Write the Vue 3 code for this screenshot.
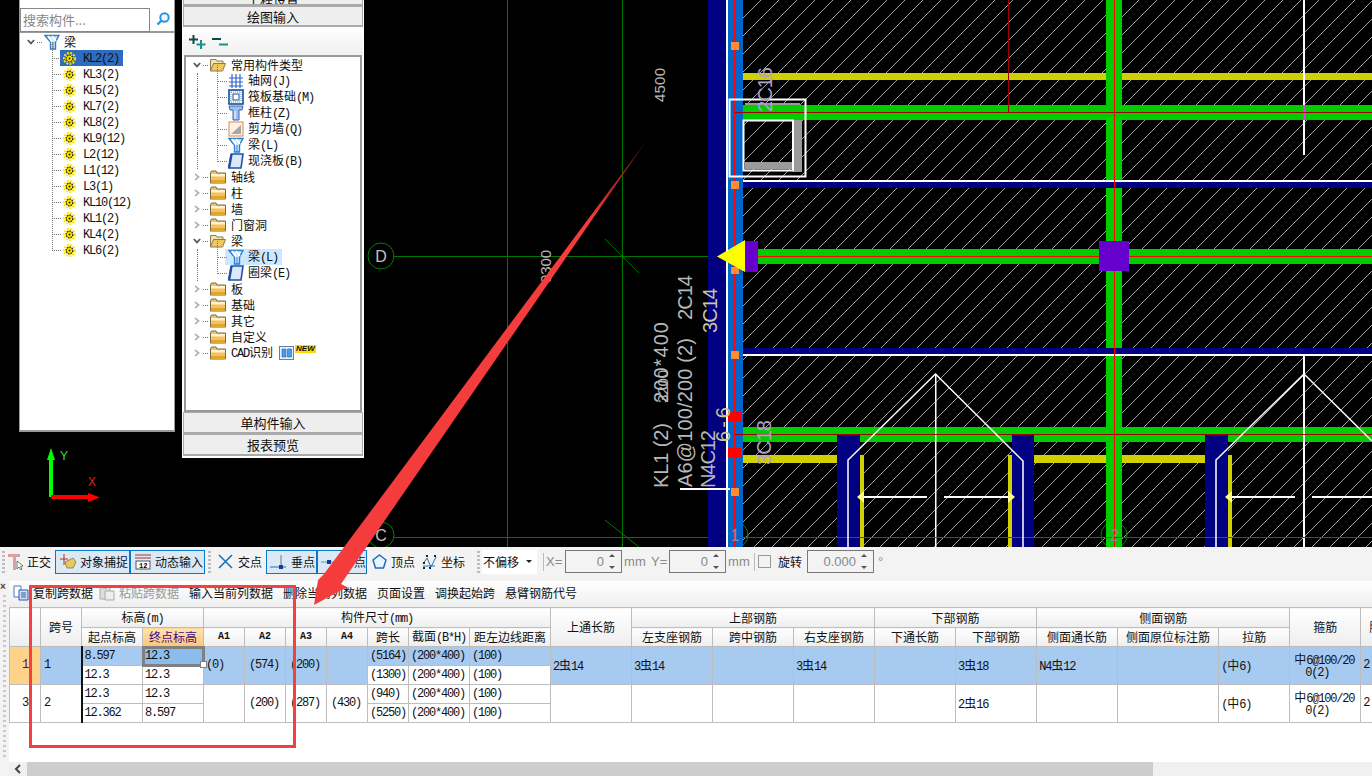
<template>
  <div class="app">
    <svg class="defs" width="0" height="0">
      <symbol id="beam" viewBox="0 0 16 16">
        <path d="M1 1.500H15L11.500 8V15H6.500V8Z" fill="#d5ecff" stroke="#2a7fd0" stroke-width="1.400"/>
        <path d="M4 2L8 8M8 2L12 7" stroke="#fff" stroke-width="1.600"/>
        <path d="M9 8V15" stroke="#2a7fd0"/>
      </symbol>
      <symbol id="gear" viewBox="0 0 13 13">
        <circle cx="6.500" cy="6.500" r="5.600" fill="none" stroke="#ffe900" stroke-width="1.800" stroke-dasharray="2 1.300"/>
        <circle cx="6.500" cy="6.500" r="4.300" fill="#ffe900"/>
        <circle cx="6.500" cy="6.500" r="3.300" fill="none" stroke="#111" stroke-width="1.300" stroke-dasharray="1.500 1"/>
        <circle cx="6.500" cy="6.500" r="1" fill="#111"/>
      </symbol>
      <symbol id="folder" viewBox="0 0 16 14">
        <path d="M.5 3V13H15.500V3H7L6 1H1.500Z" fill="#f3c45a" stroke="#7a6a44"/>
        <path d="M1 4H15V6.500H1Z" fill="#fdf3cf"/>
        <path d="M1 10H15V13H1Z" fill="#e0a62f"/>
      </symbol>
      <symbol id="folder-open" viewBox="0 0 16 14">
        <path d="M.5 13V1.500H6L7 3H13V5.500" fill="#f2e3b4" stroke="#8b7a52"/>
        <path d="M.5 13L3.500 5.500H15.500L12.500 13Z" fill="#f2c660" stroke="#8b7a52"/>
      </symbol>
      <symbol id="axis-grid" viewBox="0 0 16 16">
        <path d="M4 1V15M8 1V15M12 1V15M1 5H15M1 9H15M1 13H15" stroke="#3264c8" stroke-width="1.200"/>
      </symbol>
      <symbol id="raft" viewBox="0 0 16 16">
        <rect x="1" y="1" width="14" height="14" fill="#fff" stroke="#164e94" stroke-width="1.600"/>
        <rect x="5" y="5" width="6" height="6" fill="#fff" stroke="#164e94"/>
        <path d="M3 3H13M3 13H13M3 3V13M13 3V13" stroke="#4a88cc" stroke-dasharray="1 1"/>
      </symbol>
      <symbol id="column" viewBox="0 0 16 16">
        <path d="M1 1H15L14 5H11V15H5V5H2Z" fill="#9fc0ee" stroke="#3a66b4"/>
        <path d="M7 6V14" stroke="#fff"/>
      </symbol>
      <symbol id="wall" viewBox="0 0 16 16">
        <rect x="1" y="1" width="14" height="14" fill="#fff1e4" stroke="#d98a4a"/>
        <path d="M3 13L13 4L13 13Z" fill="#a8a8a8"/>
      </symbol>
      <symbol id="slab" viewBox="0 0 16 16">
        <path d="M3.500 1H15L13 15H1Z" fill="#dbe9fa" stroke="#1f50a8" stroke-width="1.600"/>
        <path d="M1 15L3.500 1" stroke="#1f50a8" stroke-width="2.400"/>
      </symbol>
      <symbol id="caret-open" viewBox="0 0 8 8">
        <path d="M.8 2L4 5.400L7.200 2" fill="none" stroke="#555" stroke-width="1.700"/>
      </symbol>
      <symbol id="caret" viewBox="0 0 8 8">
        <path d="M2 .8L5.600 4L2 7.200" fill="none" stroke="#b4b4b4" stroke-width="1.700"/>
      </symbol>
    </svg>

    <div class="cad">
      <svg class="cad-canvas" width="1372" height="547" viewBox="0 0 1372 547">
        <path :d="hatch" stroke="#a0a0a0" stroke-width="1" fill="none" shape-rendering="crispEdges"/>
        <path d="M507.500 0V547M622.500 0V547M394 256.500H717M394 537.500H735M605 239L639 273M605 520L639 547" stroke="#007800" fill="none"/>
        <circle v-for="c in axisDots" :key="c.t" :cx="c.x" :cy="c.y" r="13" fill="none" stroke="#008000"/>
        <rect v-for="(r, i) in bars" :key="i" :x="r[0]" :y="r[1]" :width="r[2]" :height="r[3]" :fill="r[4]"/>
        <path d="M717 256.500L745 240V272Z" fill="#ff0"/>
        <path d="M848 547V460L935.500 374L1023 461V547M1216 547V460L1304 374L1372 441" fill="none" stroke="#fff" stroke-width="1.500"/>
        <path d="M857 497L864 491V503ZM1015 497L1008 491V503ZM1225 497L1232 491V503Z" fill="#ff8"/>
        <path d="M864 497H927M944 497H1008M1232 497H1295M1312 497H1372M680 489H730" stroke="#fff" stroke-width="2" fill="none"/>
        <path d="M729.500 99.500H805.500V176.500H729.500Z M743.500 120.500H793V170.500H743.500Z" fill="none" stroke="#fff" stroke-width="2"/>
        <path d="M47 460H49V497H53V460H55L51 448Z" fill="#0f0"/>
        <path d="M51 495H88V493L100 497.500L88 502V499H51Z" fill="#f00"/>
        <text x="60" y="460" class="axis-y">Y</text>
        <text x="88" y="486" class="axis-x">X</text>
        <text v-for="c in axisDots" :key="c.t + 't'" :x="c.x" :y="c.y + 6" class="axis-t" :class="{ dim: c.dim }">{{ c.t }}</text>
        <text
            v-for="l in cadLabels"
            :key="l.t"
            class="cad-t"
            :x="l.x"
            :y="l.y"
            :font-size="l.s"
            :fill="l.c || '#b8b8b8'"
            :textLength="l.w"
            lengthAdjust="spacing"
            :transform="`rotate(-90 ${l.x} ${l.y})`">{{ l.t }}</text>
      </svg>

      <div class="panel-left">
        <div class="search">
          <div class="search-box">搜索构件...</div>
          <svg class="search-ic" width="16" height="16" viewBox="0 0 16 16">
            <circle cx="9.500" cy="6.500" r="4.200" fill="#eaf6ff" stroke="#2e96d8" stroke-width="2"/>
            <path d="M6.500 9.500L2.500 13.500" stroke="#2e96d8" stroke-width="2.400"/>
          </svg>
        </div>
        <div class="tree">
          <div class="row">
            <svg class="caret"><use href="#caret-open"/></svg>
            <i class="dots root-dots"></i>
            <svg class="ic"><use href="#beam"/></svg>
            <span class="label root-label">梁</span>
          </div>
          <div v-for="(name, i) in members" :key="name" class="row member">
            <div class="node" :class="{ picked: i === 0 }">
              <svg class="gear"><use href="#gear"/></svg>
              <span class="label gear-label"><T :t="name"/></span>
            </div>
          </div>
        </div>
      </div>

      <div class="panel-mid">
        <div class="side-btn cut">工程设置</div>
        <div class="side-btn">绘图输入</div>
        <div class="expand">
          <svg width="18" height="14" viewBox="0 0 18 14">
            <path d="M4.500 0V9M0 4.500H9" stroke="#0d4a48" stroke-width="2"/>
            <path d="M12 5V14M7.500 9.500H16.500" stroke="#12948e" stroke-width="2"/>
          </svg>
          <svg width="18" height="14" viewBox="0 0 18 14">
            <path d="M0 4H9" stroke="#0d4a48" stroke-width="2"/>
            <path d="M7 9.500H16" stroke="#12948e" stroke-width="2"/>
          </svg>
        </div>
        <div class="type-tree">
          <div v-for="r in typeRows" :key="r.label + r.lvl" class="row" :class="r.lvl ? 'lvl1' : 'lvl0'">
            <template v-if="r.lvl">
              <div class="node" :class="{ soft: r.sel }">
                <svg class="ic"><use :href="'#' + r.icon"/></svg>
                <span class="label child-label"><T :t="r.label"/></span>
              </div>
            </template>
            <template v-else>
              <svg class="caret"><use :href="r.open ? '#caret-open' : '#caret'"/></svg>
              <i class="dots"></i>
              <svg class="fold"><use :href="r.open ? '#folder-open' : '#folder'"/></svg>
              <span class="label fold-label"><T :t="r.label"/></span>
              <template v-if="r.isNew">
                <svg class="cad-ic" width="15" height="14" viewBox="0 0 15 14">
                  <rect x=".5" y=".5" width="14" height="13" fill="#e8f2fc" stroke="#6a7f98"/>
                  <path d="M3 3H7V11H3ZM8.500 3H12.500V11H8.500Z" fill="#4a9ce8" stroke="#1e64b4" stroke-width=".6"/>
                </svg>
                <span class="new-tag">NEW</span>
              </template>
            </template>
          </div>
        </div>
        <div class="side-btn low">单构件输入</div>
        <div class="side-btn low">报表预览</div>
      </div>
    </div>

    <div class="snapbar">
      <i class="grip"></i>
      <svg class="tool-ic ortho" width="16" height="18" viewBox="0 0 16 18">
        <path d="M0 1H12V4H8V17H5V4H0Z" fill="#dba0a0"/>
        <path d="M9 8L9 16L11 14L13 17L14 16L12.500 13.500L15 13Z" fill="#fff" stroke="#555" stroke-width=".8"/>
      </svg>
      <span class="txt ortho-t">正交</span>
      <div class="tbtn snap">
        <svg width="18" height="18" viewBox="0 0 18 18">
          <path d="M1 6H9M5 1V12" stroke="#b03020"/>
          <path d="M6 9L14 5L17 9L14 15L8 15Z" fill="#e8c860" stroke="#8a7430" stroke-width=".8"/>
        </svg>
        <span class="txt">对象捕捉</span>
      </div>
      <div class="tbtn snap">
        <svg width="18" height="18" viewBox="0 0 18 18">
          <path d="M1 2H17M1 5H17" stroke="#a33"/>
          <rect x="2" y="8" width="14" height="8" fill="#fff" stroke="#555"/>
          <text x="5" y="15" class="mini">12</text>
        </svg>
        <span class="txt">动态输入</span>
      </div>
      <i class="grip g2"></i>
      <svg class="tool-ic cross" width="15" height="15" viewBox="0 0 15 15">
        <path d="M1 1L14 14M14 1L1 14" stroke="#1f6fc0" stroke-width="1.600"/>
      </svg>
      <span class="txt cross-t">交点</span>
      <div class="tbtn pt first">
        <svg width="16" height="16" viewBox="0 0 16 16">
          <path d="M0 13H16" stroke="#1f6fc0"/>
          <path d="M11 1V13" stroke="#777"/>
          <rect x="9" y="11" width="4" height="4" fill="#123e94"/>
        </svg>
        <span class="txt">垂点</span>
      </div>
      <div class="tbtn pt">
        <svg width="16" height="16" viewBox="0 0 16 16">
          <path d="M0 8H16" stroke="#5a90cc"/>
          <rect x="6" y="6" width="4" height="4" fill="#123e94"/>
        </svg>
        <span class="txt">中点</span>
      </div>
      <svg class="tool-ic top-ic" width="15" height="15" viewBox="0 0 15 15">
        <path d="M7.500 1L14 6L11.500 14H3.500L1 6Z" fill="#e8f4ff" stroke="#1f6fc0" stroke-width="1.500"/>
      </svg>
      <span class="txt top-t">顶点</span>
      <svg class="tool-ic xy-ic" width="15" height="16" viewBox="0 0 15 16">
        <path d="M1 10L5 4L9 13L14 3M1 12H13" fill="none" stroke="#1f6fc0"/>
        <path d="M1 8h2v2H1zM4 1h2v2H4zM12 1h2v2h-2zM1 13h2v2H1zM7 13h2v2H7z" fill="#222"/>
      </svg>
      <span class="txt top-t">坐标</span>
      <i class="grip g3"></i>
      <div class="offset">
        <span class="txt">不偏移</span>
        <span class="drop"></span>
      </div>
      <i class="vline v1"></i>
      <span class="gray x-t">X=</span>
      <div class="spin s1"><span>0</span><i class="arrows"></i></div>
      <span class="gray mm">mm</span>
      <span class="gray y-t">Y=</span>
      <div class="spin s1"><span>0</span><i class="arrows"></i></div>
      <span class="gray mm">mm</span>
      <i class="vline v2"></i>
      <i class="check"></i>
      <span class="txt rot">旋转</span>
      <div class="spin s2"><span>0.000</span><i class="arrows"></i></div>
      <span class="gray deg">°</span>
    </div>

    <div class="lower">
      <div class="strip">
        <span class="strip-x">×</span>
      </div>
      <div class="lower-main">
        <div class="gridbar">
          <svg class="bar-ic" width="16" height="16" viewBox="0 0 16 16">
            <path d="M1 1H8V12H1Z" fill="#fff" stroke="#4a78b8"/>
            <path d="M6 5H15V15H6Z" fill="#cfe2f8" stroke="#2a5ca8"/>
            <path d="M8 8H13M8 10H13M8 12H13" stroke="#2a5ca8"/>
          </svg>
          <span class="bar-t b1">复制跨数据</span>
          <svg class="bar-ic p" width="16" height="16" viewBox="0 0 16 16">
            <path d="M1 2H11V14H1Z" fill="#ddd" stroke="#aaa"/>
            <path d="M6 6H15V15H6Z" fill="#eee" stroke="#aaa"/>
            <path d="M4 1H8V4H4Z" fill="#bbb"/>
          </svg>
          <span class="bar-t b2">粘贴跨数据</span>
          <span v-for="a in barActions" :key="a" class="bar-t act">{{ a }}</span>
        </div>
        <div class="table-wrap">
          <table class="span-table">
            <colgroup>
              <col v-for="(w, i) in colWidths" :key="i" :style="{ width: w + 'px' }">
            </colgroup>
            <thead>
              <tr>
                <th rowspan="2"></th>
                <th rowspan="2">跨号</th>
                <th colspan="2"><T t="标高(m)"/></th>
                <th colspan="7"><T t="构件尺寸(mm)"/></th>
                <th rowspan="2">上通长筋</th>
                <th colspan="3">上部钢筋</th>
                <th colspan="2">下部钢筋</th>
                <th colspan="3">侧面钢筋</th>
                <th rowspan="2">箍筋</th>
                <th rowspan="2">肢数</th>
              </tr>
              <tr class="head2">
                <th>起点标高</th>
                <th class="cur">终点标高</th>
                <th class="a">A1</th>
                <th class="a">A2</th>
                <th class="a">A3</th>
                <th class="a">A4</th>
                <th>跨长</th>
                <th><T t="截面(B*H)"/></th>
                <th>距左边线距离</th>
                <th>左支座钢筋</th>
                <th>跨中钢筋</th>
                <th>右支座钢筋</th>
                <th>下通长筋</th>
                <th>下部钢筋</th>
                <th>侧面通长筋</th>
                <th>侧面原位标注筋</th>
                <th>拉筋</th>
              </tr>
            </thead>
            <tbody>
              <tr class="sel">
                <td rowspan="2" class="num">1</td>
                <td rowspan="2" class="no">1</td>
                <td class="elev">8.597</td>
                <td class="active">12.3<i class="handle"></i></td>
                <td rowspan="2">(0)</td>
                <td rowspan="2" class="mid">(574)</td>
                <td rowspan="2" class="mid">(200)</td>
                <td rowspan="2"></td>
                <td>(5164)</td>
                <td>(200*400)</td>
                <td>(100)</td>
                <td rowspan="2"><T t="2虫14"/></td>
                <td rowspan="2"><T t="3虫14"/></td>
                <td rowspan="2"></td>
                <td rowspan="2"><T t="3虫14"/></td>
                <td rowspan="2"></td>
                <td rowspan="2"><T t="3虫18"/></td>
                <td rowspan="2"><T t="N4虫12"/></td>
                <td rowspan="2"></td>
                <td rowspan="2"><T t="(中6)"/></td>
                <td rowspan="2" class="stir"><T t="中6@100/20"/><br><span class="in"><T t="0(2)"/></span></td>
                <td rowspan="2">2</td>
              </tr>
              <tr class="plain">
                <td class="elev">12.3</td>
                <td>12.3</td>
                <td>(1300)</td>
                <td>(200*400)</td>
                <td>(100)</td>
              </tr>
              <tr class="plain">
                <td rowspan="2" class="num off">3</td>
                <td rowspan="2" class="no">2</td>
                <td class="elev">12.3</td>
                <td>12.3</td>
                <td rowspan="2"></td>
                <td rowspan="2" class="mid">(200)</td>
                <td rowspan="2" class="mid">(287)</td>
                <td rowspan="2" class="mid">(430)</td>
                <td>(940)</td>
                <td>(200*400)</td>
                <td>(100)</td>
                <td rowspan="2"></td>
                <td rowspan="2"></td>
                <td rowspan="2"></td>
                <td rowspan="2"></td>
                <td rowspan="2"></td>
                <td rowspan="2"><T t="2虫16"/></td>
                <td rowspan="2"></td>
                <td rowspan="2"></td>
                <td rowspan="2"><T t="(中6)"/></td>
                <td rowspan="2" class="stir"><T t="中6@100/20"/><br><span class="in"><T t="0(2)"/></span></td>
                <td rowspan="2">2</td>
              </tr>
              <tr class="plain">
                <td class="elev">12.362</td>
                <td>8.597</td>
                <td>(5250)</td>
                <td>(200*400)</td>
                <td>(100)</td>
              </tr>
            </tbody>
          </table>
        </div>
        <div class="hscroll">
          <div class="hs-btn">
            <svg width="8" height="10" viewBox="0 0 8 10"><path d="M6 1L2 5L6 9" fill="none" stroke="#444" stroke-width="2"/></svg>
          </div>
          <div class="hs-thumb"></div>
        </div>
      </div>
    </div>

    <div class="mark-box"></div>
    <svg class="mark-arrow" width="1372" height="776" viewBox="0 0 1372 776">
      <defs>
        <linearGradient id="fade" x1="647" y1="140" x2="590" y2="222" gradientUnits="userSpaceOnUse">
          <stop offset="0" stop-color="#501010"/>
          <stop offset="1" stop-color="#f43c3c"/>
        </linearGradient>
      </defs>
      <path d="M647 140L341 584L347 587L314 605L318 580L324 574Z" fill="url(#fade)"/>
    </svg>
  </div>
</template>

<script setup>
import { h } from "vue";

// latin and cjk runs need different sizes to look like the 12px bitmap font
const T = (props) =>
  (props.t.match(/[\x00-\x7f]+|[^\x00-\x7f]+/g) || []).map((s) =>
    h("span", { class: /^[\x00-\x7f]/.test(s) ? "lat" : "cjk" }, s)
  );
T.props = ["t"];

const members = [
  "KL2(2)", "KL3(2)", "KL5(2)", "KL7(2)", "KL8(2)", "KL9(12)", "L2(12)",
  "L1(12)", "L3(1)", "KL10(12)", "KL1(2)", "KL4(2)", "KL6(2)",
];

const typeRows = [
  { label: "常用构件类型", lvl: 0, open: true },
  { label: "轴网(J)", lvl: 1, icon: "axis-grid" },
  { label: "筏板基础(M)", lvl: 1, icon: "raft" },
  { label: "框柱(Z)", lvl: 1, icon: "column" },
  { label: "剪力墙(Q)", lvl: 1, icon: "wall" },
  { label: "梁(L)", lvl: 1, icon: "beam" },
  { label: "现浇板(B)", lvl: 1, icon: "slab" },
  { label: "轴线", lvl: 0 },
  { label: "柱", lvl: 0 },
  { label: "墙", lvl: 0 },
  { label: "门窗洞", lvl: 0 },
  { label: "梁", lvl: 0, open: true },
  { label: "梁(L) ", lvl: 1, icon: "beam", sel: true },
  { label: "圈梁(E)", lvl: 1, icon: "slab" },
  { label: "板", lvl: 0 },
  { label: "基础", lvl: 0 },
  { label: "其它", lvl: 0 },
  { label: "自定义", lvl: 0 },
  { label: "CAD识别", lvl: 0, isNew: true },
];

const barActions = ["输入当前列数据", "删除当前列数据", "页面设置", "调换起始跨", "悬臂钢筋代号"];

const colWidths = [31, 41, 61, 61, 41, 41, 41, 41, 41, 61, 81, 81, 81, 81, 81, 81, 81, 81, 101, 71, 71, 41];

// diagonal fill of the floor slab, x + y = c, clipped to the slab's rectangle
const hatch = (() => {
  let d = "";
  for (let c = 743; c < 1372 + 547; c += 18) {
    const x0 = Math.max(743, c - 547);
    const x1 = Math.min(1372, c);
    d += `M${x0} ${c - x0}L${x1} ${c - x1}`;
  }
  return d;
})();

const axisDots = [
  { t: "D", x: 381, y: 256 },
  { t: "C", x: 381, y: 535 },
  { t: "1", x: 735, y: 535, dim: true },
  { t: "2", x: 1114, y: 535, dim: true },
];

const NAVY = "#000080";
const GREEN = "#00cc00";
const YELLOW = "#d0d000";
const WHITE = "#ffffff";
const RED = "#ff0000";
const DARK = "#a00000";
const PURPLE = "#6600cc";
const ORANGE = "#ff8c32";

// x, y, w, h, colour: painted in this order
const bars = [
  [743, 73, 629, 7, YELLOW],
  [743, 105, 629, 15, GREEN],
  [758, 249, 614, 15, GREEN],
  [743, 427, 629, 15, GREEN],
  [743, 455, 94, 8, YELLOW],
  [1034, 455, 171, 8, YELLOW],
  [1106, 0, 16, 547, GREEN],
  [727, 182, 645, 6, NAVY],
  [727, 180, 645, 2, WHITE],
  [727, 348, 645, 6, NAVY],
  [727, 354, 645, 2, WHITE],
  [708, 0, 18, 547, NAVY],
  [726, 0, 2, 547, WHITE],
  [728, 0, 15, 547, "#0066cc"],
  [837, 435, 23, 112, NAVY],
  [1012, 435, 22, 112, NAVY],
  [1205, 435, 23, 112, NAVY],
  [860, 455, 4, 92, YELLOW],
  [1008, 455, 4, 92, YELLOW],
  [1228, 455, 4, 92, YELLOW],
  [935, 374, 1.500, 173, WHITE],
  [1303, 356, 2, 191, WHITE],
  [1303, 0, 2, 155, WHITE],
  [1303, 105, 2, 15, "#e040e0"],
  [1008, 0, 1, 112, DARK],
  [735, 112, 637, 1, DARK],
  [735, 434, 637, 1, DARK],
  [717, 256, 655, 1, RED],
  [735, 537, 637, 1, RED],
  [734, 0, 1, 547, RED],
  [1114, 0, 1, 547, RED],
  [745, 241, 13, 31, PURPLE],
  [1099, 241, 30, 30, PURPLE],
  [731, 42, 8, 8, ORANGE],
  [731, 181, 8, 8, ORANGE],
  [731, 267, 8, 7, ORANGE],
  [731, 351, 8, 8, ORANGE],
  [731, 488, 8, 8, ORANGE],
  [728, 412, 13, 9, RED],
  [728, 448, 13, 9, RED],
  [793, 120, 9, 52, "#9a9a9a"],
  [745, 162, 48, 7, "#9a9a9a"],
  [745, 103, 55, 2, "#9a9a9a"],
];

const cadLabels = [
  { t: "4500", x: 665, y: 102, w: 34, s: 15 },
  { t: "9300", x: 551, y: 283, w: 33, s: 15 },
  { t: "KL1 (2)", x: 668, y: 488, w: 65, s: 20 },
  { t: "3200", x: 668, y: 403, w: 33, s: 15 },
  { t: "200*400", x: 668, y: 403, w: 81, s: 20 },
  { t: "A6@100/200 (2)", x: 692, y: 487, w: 149, s: 20 },
  { t: "2C14", x: 692, y: 320, w: 45, s: 20 },
  { t: "N4C12", x: 715, y: 488, w: 58, s: 20 },
  { t: "3C14", x: 717, y: 333, w: 45, s: 20, c: "#c8c8a8" },
  { t: "6-6", x: 730, y: 442, w: 35, s: 20, c: "#c8c890" },
  { t: "3C18", x: 771, y: 465, w: 45, s: 20, c: "#b0a0c8" },
  { t: "2C16", x: 772, y: 112, w: 45, s: 20, c: "#b0a0c8" },
];
</script>

<style scoped>
.app {
  position: relative;
  width: 1372px;
  height: 776px;
  overflow: hidden;
  display: flex;
  flex-direction: column;
  background: #fff;
  font-family: "Noto Sans CJK SC", "Liberation Sans", sans-serif;
  font-size: 12px;
  color: #111;
}

.defs {
  position: absolute;
}

/* drawing area, the panels float on it like windows */
.cad {
  position: relative;
  height: 547px;
  flex: none;
  background: #000;
}

.cad-canvas {
  position: absolute;
  left: 0;
  top: 0;
  display: block;
}

.cad-t {
  font-family: "Liberation Sans", sans-serif;
}

.axis-t {
  font-family: "Liberation Sans", sans-serif;
  font-size: 16px;
  fill: #c0c0c0;
  text-anchor: middle;
}

.axis-t.dim {
  fill: #8a8a8a;
}

.axis-y,
.axis-x {
  font-family: "Liberation Sans", sans-serif;
  font-size: 12px;
}

.axis-y {
  fill: #2ce02c;
}

.axis-x {
  fill: #e02020;
}

.panel-left {
  position: absolute;
  left: 19px;
  top: 0;
  width: 156px;
  height: 432px;
  box-sizing: border-box;
  background: #fff;
  border: solid #999;
  border-width: 0 1px 2px 1px;
}

.search {
  height: 33px;
  box-sizing: border-box;
  padding-top: 8px;
  display: flex;
  border-bottom: 2px solid #999;
}

.search-box {
  width: 130px;
  height: 24px;
  box-sizing: border-box;
  border: 1px solid #888;
  color: #888;
  font-size: 13px;
  line-height: 21px;
  padding-left: 2px;
}

.search-ic {
  margin: 3px 0 0 5px;
}

.tree {
  padding-top: 1px;
}

.row {
  position: relative;
  height: 16px;
  display: flex;
  align-items: center;
}

.node {
  display: flex;
  align-items: center;
  height: 16px;
  padding: 0 4px 0 3px;
}

.caret {
  width: 8px;
  height: 8px;
  margin-left: 7px;
  flex: none;
}

.dots {
  width: 5px;
  margin-left: 2px;
  border-top: 1px dotted #777;
  flex: none;
}

.root-dots {
  margin-right: 2px;
}

.ic {
  width: 16px;
  height: 16px;
  flex: none;
}

.gear {
  width: 13px;
  height: 13px;
  flex: none;
}

.label {
  white-space: nowrap;
  padding-bottom: 2px;
}

.root-label {
  margin-left: 4px;
}

.gear-label {
  margin-left: 7px;
}

.member {
  padding-left: 40px;
}

.member::before {
  content: "";
  position: absolute;
  left: 32px;
  top: -8px;
  width: 8px;
  height: 16px;
  border-left: 1px dotted #777;
  border-bottom: 1px dotted #777;
}

.picked {
  background: #2f6cc0;
}

.panel-mid {
  position: absolute;
  left: 182px;
  top: 0;
  width: 182px;
  height: 458px;
  box-sizing: border-box;
  padding: 0 1px 1px;
  background: #fff;
}

.side-btn {
  height: 21px;
  box-sizing: border-box;
  border: solid #aaa;
  border-width: 1px 1px 2px;
  background: #eee;
  text-align: center;
  font-size: 13px;
  line-height: 19px;
}

.side-btn.cut {
  height: 6px;
  border-top: 0;
  overflow: hidden;
  line-height: 0;
}

.side-btn.low {
  height: 22px;
  line-height: 20px;
}

.expand {
  height: 28px;
  box-sizing: border-box;
  padding: 8px 0 0 6px;
  display: flex;
  gap: 5px;
  background: linear-gradient(#fff, #f0f0f0);
}

.type-tree {
  height: 357px;
  box-sizing: border-box;
  margin: 0 1px;
  padding-top: 0;
  border: 2px solid #999;
  background: #fff;
}

.fold {
  width: 16px;
  height: 14px;
  flex: none;
}

.fold-label {
  margin-left: 5px;
}

.lvl0 .dots {
  margin-right: 2px;
}

.lvl1 {
  padding-left: 39px;
}

.lvl1::before {
  content: "";
  position: absolute;
  left: 31px;
  top: -8px;
  width: 9px;
  height: 16px;
  border-left: 1px dotted #777;
  border-bottom: 1px dotted #777;
}

.lvl1::after {
  content: "";
  position: absolute;
  left: 11px;
  top: 0;
  height: 16px;
  border-left: 1px dotted #777;
}

.child-label {
  margin-left: 4px;
}

.soft {
  background: #cce8ff;
}

.cad-ic {
  margin-left: 6px;
}

.new-tag {
  margin: -8px 0 0 1px;
  padding: 0 1px;
  background: #ffdc00;
  font: italic bold 8px/8px "Liberation Sans", sans-serif;
  color: #111;
}

/* snap toolbar */
.snapbar {
  height: 34px;
  flex: none;
  box-sizing: border-box;
  padding-bottom: 5px;
  display: flex;
  align-items: center;
  background: #f3f3f3;
}

.grip {
  width: 3px;
  height: 22px;
  margin-left: 2px;
  flex: none;
  background: repeating-linear-gradient(#bbb 0 2px, transparent 2px 4px);
}

.g2 {
  margin-left: 3px;
}

.g3 {
  margin-left: 12px;
}

.tool-ic {
  flex: none;
}

.ortho {
  margin-left: 3px;
}

.txt {
  white-space: nowrap;
  flex: none;
}

.ortho-t {
  margin-left: 3px;
}

.tbtn {
  height: 24px;
  box-sizing: border-box;
  display: flex;
  align-items: center;
  border: 1px solid #0a78c8;
  background: #dbe9f6;
  flex: none;
}

.snap {
  width: 75px;
  gap: 3px;
  padding-left: 3px;
}

.snapbar > .ortho-t + .snap {
  margin-left: 4px;
}

.cross {
  margin-left: 7px;
}

.cross-t {
  margin-left: 5px;
}

.pt {
  width: 50px;
  gap: 5px;
  padding-left: 3px;
}

.pt.first {
  width: 51px;
  margin-left: 4px;
}

.top-ic {
  margin-left: 5px;
}

.top-t {
  margin-left: 4px;
}

.xy-ic {
  margin-left: 7px;
}

.offset {
  width: 55px;
  height: 24px;
  margin-left: 2px;
  box-sizing: border-box;
  display: flex;
  align-items: center;
  justify-content: space-between;
  background: #fff;
  padding: 0 5px 0 1px;
  flex: none;
}

.drop {
  border: 3px solid transparent;
  border-top: 3px solid #222;
  border-bottom: 0;
}

.vline {
  width: 1px;
  height: 18px;
  background: #bbb;
  flex: none;
}

.v1 {
  margin-left: 6px;
}

.v2 {
  margin-left: 5px;
}

.gray {
  font-family: "Liberation Sans", sans-serif;
  font-size: 13px;
  color: #8a8a8a;
  flex: none;
}

.x-t {
  width: 16px;
  margin-left: 2px;
}

.y-t {
  width: 15px;
  margin-left: 6px;
}

.mm {
  width: 21px;
  margin-left: 2px;
}

.spin {
  height: 23px;
  margin-left: 3px;
  box-sizing: border-box;
  border: 1px solid #777;
  background: #f3f3f3;
  flex: none;
  display: flex;
  align-items: center;
  justify-content: flex-end;
  font-family: "Liberation Sans", sans-serif;
  font-size: 13px;
  color: #888;
}

.s1 {
  width: 57px;
}

.s2 {
  width: 67px;
  margin-left: 5px;
}

.arrows {
  width: 17px;
  height: 17px;
  position: relative;
}

.arrows::before,
.arrows::after {
  content: "";
  position: absolute;
  left: 5px;
  border: 3px solid transparent;
}

.arrows::before {
  top: 1px;
  border-bottom-color: #555;
  border-top: 0;
}

.arrows::after {
  bottom: 1px;
  border-top-color: #555;
  border-bottom: 0;
}

.check {
  width: 11px;
  height: 11px;
  margin-left: 3px;
  border: 1px solid #999;
  background: #f3f3f3;
  flex: none;
}

.rot {
  margin-left: 7px;
}

.deg {
  margin-left: 4px;
}

/* lower part with the span table */
.lower {
  flex: 1;
  min-height: 0;
  display: flex;
}

.strip {
  width: 9px;
  flex: none;
  background:
    repeating-linear-gradient(#c8c8c8 0 2px, transparent 2px 5px) 3px 14px / 3px 165px no-repeat,
    #f3f3f3;
}

.strip-x {
  display: block;
  font: bold 10px/10px "Liberation Sans", sans-serif;
  color: #444;
  margin-top: 1px;
}

.lower-main {
  flex: 1;
  min-width: 0;
  display: flex;
  flex-direction: column;
}

.gridbar {
  height: 26px;
  flex: none;
  box-sizing: border-box;
  padding-bottom: 3px;
  display: flex;
  align-items: center;
  background: linear-gradient(#fff, #eee);
}

.bar-ic {
  margin-left: 4px;
  flex: none;
}

.bar-ic.p {
  margin-left: 6px;
}

.bar-t {
  flex: none;
  white-space: nowrap;
}

.b1 {
  margin-left: 4px;
}

.b2 {
  margin-left: 4px;
  color: #999;
}

.act {
  margin-left: 10px;
}

.table-wrap {
  flex: 1;
  min-height: 0;
  overflow: hidden;
}

.span-table {
  table-layout: fixed;
  width: 1392px;
  border-collapse: collapse;
  border-top: 1px solid #aaa;
}

.span-table th,
.span-table td {
  box-sizing: border-box;
  border: 1px solid #bdbdbd;
  padding: 0;
  overflow: hidden;
  white-space: nowrap;
  font-weight: 400;
}

.span-table th {
  height: 20px;
  text-align: center;
  background: linear-gradient(#fff, #eee);
  line-height: 14px;
}

.span-table .head2 th {
  height: 19px;
}

.span-table th.a {
  font: bold 10px/14px "Liberation Mono", monospace;
}

.span-table th.cur {
  background: linear-gradient(#fde4b4, #f8c878);
  color: #4a0a80;
}

.span-table td {
  height: 19px;
  padding-left: 2px;
  font-family: "Liberation Mono", "Noto Sans CJK SC", monospace;
  font-size: 12px;
  letter-spacing: -1.2px;
  line-height: 15px;
}

.span-table .sel td {
  background: #a6caf0;
}

.span-table .plain td {
  background: #fff;
}

.span-table td.num {
  background: #fdd38a;
  color: #4a0a80;
  text-align: center;
  padding: 0;
}

.span-table td.num.off {
  background: #fff;
  color: #111;
}

.span-table td.no {
  padding-left: 3px;
}

.span-table td.elev {
  border-left: 2px solid #111;
}

.span-table td.mid {
  padding-left: 4px;
}

.span-table td.active {
  position: relative;
  background: #8cbcec;
  outline: 3px solid #808080;
  outline-offset: -2px;
  overflow: visible;
  z-index: 1;
}

.handle {
  position: absolute;
  right: -4px;
  bottom: -3px;
  width: 5px;
  height: 5px;
  background: #fff;
  border: 1px solid #808080;
}

.span-table td.stir {
  line-height: 12px;
  padding-left: 4px;
}

.in {
  padding-left: 11px;
}

.hscroll {
  height: 14px;
  flex: none;
  display: flex;
  background: #f0f0f0;
}

.hs-btn {
  width: 18px;
  display: flex;
  align-items: center;
  justify-content: center;
}

.hs-thumb {
  width: 1126px;
  background: #cdcdcd;
}

/* hand-drawn annotation on top of the screenshot */
.mark-box {
  position: absolute;
  left: 29px;
  top: 585px;
  width: 267px;
  height: 163px;
  box-sizing: border-box;
  border: 3px solid #f44040;
  pointer-events: none;
  z-index: 2;
}

.mark-arrow {
  position: absolute;
  left: 0;
  top: 0;
  pointer-events: none;
  z-index: 3;
}

.mini {
  font: bold 7px "Liberation Mono", monospace;
}
</style>

<style>
.lat {
  font-family: "Liberation Mono", monospace;
  font-size: 12px;
  letter-spacing: -1.2px;
}

.cjk {
  font-family: "Noto Sans CJK SC", sans-serif;
  font-size: 12px;
  letter-spacing: 0;
}
</style>
